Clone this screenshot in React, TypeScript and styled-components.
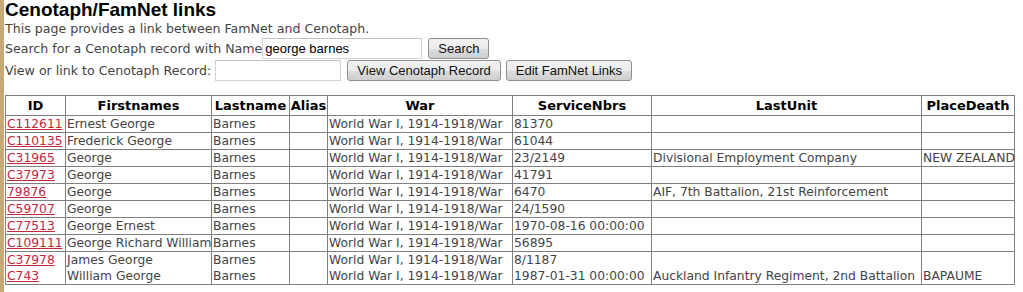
import styled, { createGlobalStyle } from 'styled-components';

const GlobalStyle = createGlobalStyle`
  body {
    margin: 0;
    background: #fff;
    font-family: 'DejaVu Sans', Verdana, sans-serif;
  }
`;

interface CenotaphRecord {
  id: string;
  firstnames: string;
  lastname: string;
  alias: string;
  war: string;
  serviceNbrs: string;
  lastUnit: string;
  placeDeath: string;
}

const WAR = 'World War I, 1914-1918/War';

const records: CenotaphRecord[][] = [
  [{ id: 'C112611', firstnames: 'Ernest George', lastname: 'Barnes', alias: '', war: WAR, serviceNbrs: '81370', lastUnit: '', placeDeath: '' }],
  [{ id: 'C110135', firstnames: 'Frederick George', lastname: 'Barnes', alias: '', war: WAR, serviceNbrs: '61044', lastUnit: '', placeDeath: '' }],
  [{ id: 'C31965', firstnames: 'George', lastname: 'Barnes', alias: '', war: WAR, serviceNbrs: '23/2149', lastUnit: 'Divisional Employment Company', placeDeath: 'NEW ZEALAND' }],
  [{ id: 'C37973', firstnames: 'George', lastname: 'Barnes', alias: '', war: WAR, serviceNbrs: '41791', lastUnit: '', placeDeath: '' }],
  [{ id: '79876', firstnames: 'George', lastname: 'Barnes', alias: '', war: WAR, serviceNbrs: '6470', lastUnit: 'AIF, 7th Battalion, 21st Reinforcement', placeDeath: '' }],
  [{ id: 'C59707', firstnames: 'George', lastname: 'Barnes', alias: '', war: WAR, serviceNbrs: '24/1590', lastUnit: '', placeDeath: '' }],
  [{ id: 'C77513', firstnames: 'George Ernest', lastname: 'Barnes', alias: '', war: WAR, serviceNbrs: '1970-08-16 00:00:00', lastUnit: '', placeDeath: '' }],
  [{ id: 'C109111', firstnames: 'George Richard William', lastname: 'Barnes', alias: '', war: WAR, serviceNbrs: '56895', lastUnit: '', placeDeath: '' }],
  [
    { id: 'C37978', firstnames: 'James George', lastname: 'Barnes', alias: '', war: WAR, serviceNbrs: '8/1187', lastUnit: '', placeDeath: '' },
    { id: 'C743', firstnames: 'William George', lastname: 'Barnes', alias: '', war: WAR, serviceNbrs: '1987-01-31 00:00:00', lastUnit: 'Auckland Infantry Regiment, 2nd Battalion', placeDeath: 'BAPAUME' },
  ],
];

const columns: { label: string; width: number }[] = [
  { label: 'ID', width: 60 },
  { label: 'Firstnames', width: 146 },
  { label: 'Lastname', width: 78 },
  { label: 'Alias', width: 38 },
  { label: 'War', width: 185 },
  { label: 'ServiceNbrs', width: 139 },
  { label: 'LastUnit', width: 270 },
  { label: 'PlaceDeath', width: 93 },
];

const Page = styled.div`
  border-left: 4px solid #c8a877;
  padding-left: 1px;
  min-height: 292px;
  box-sizing: border-box;
`;

const Title = styled.h1`
  margin: 0;
  font-family: 'Liberation Sans', Arial, sans-serif;
  font-size: 19px;
  line-height: 20px;
  font-weight: bold;
  color: #000;
`;

const Intro = styled.p`
  margin: 0;
  font-size: 12.6px;
  line-height: 17px;
  color: #444;
`;

const FormRow = styled.div`
  display: flex;
  align-items: center;
  height: 22px;
  font-size: 12.6px;
  color: #444;
`;

const TextField = styled.input<{ $width: number }>`
  width: ${p => p.$width}px;
  height: 21px;
  box-sizing: border-box;
  border: 1px solid #d4d4d4;
  border-top-color: #c0c0c0;
  padding: 0 2px;
  font-family: 'Liberation Sans', Arial, sans-serif;
  font-size: 13px;
  color: #000;
  outline: none;
`;

const Button = styled.button<{ $gap?: number }>`
  height: 21px;
  margin-left: ${p => p.$gap ?? 6}px;
  padding: 0 9px;
  border: 1px solid #8e8f8f;
  border-radius: 3px;
  background: linear-gradient(#f2f2f2 0%, #ebebeb 50%, #dddddd 51%, #cfcfcf 100%);
  font-family: 'Liberation Sans', Arial, sans-serif;
  font-size: 13px;
  color: #111;
`;

const Table = styled.table`
  width: 1010px;
  margin-top: 14px;
  border-collapse: collapse;
  table-layout: fixed;
  border: 1px solid #808080;
  font-size: 12.3px;
`;

const HeadCell = styled.th`
  border: 1px solid #808080;
  padding: 0;
  height: 19px;
  line-height: 16px;
  font-size: 13px;
  font-weight: bold;
  color: #000;
  white-space: nowrap;
  overflow: hidden;
`;

const Cell = styled.td`
  border: 1px solid #808080;
  padding: 0 0 0 1px;
  line-height: 16px;
  color: #444;
  white-space: nowrap;
  overflow: hidden;
  vertical-align: middle;
`;

const RecordLink = styled.a`
  color: #c0283c;
  text-decoration: underline;
`;

function stack(group: CenotaphRecord[], key: keyof CenotaphRecord) {
  return group.map((r, i) => (
    <span key={i}>
      {i > 0 && <br />}
      {r[key]}
    </span>
  ));
}

export default function App() {
  return (
    <Page>
      <GlobalStyle />
      <Title>Cenotaph/FamNet links</Title>
      <Intro>This page provides a link between FamNet and Cenotaph.</Intro>
      <FormRow>
        Search for a Cenotaph record with Name
        <TextField $width={160} defaultValue="george barnes" />
        <Button>Search</Button>
      </FormRow>
      <FormRow>
        View or link to Cenotaph Record:&nbsp;
        <TextField $width={126} />
        <Button>View Cenotaph Record</Button>
        <Button $gap={5}>Edit FamNet Links</Button>
      </FormRow>
      <Table>
        <colgroup>
          {columns.map(c => (
            <col key={c.label} style={{ width: c.width }} />
          ))}
        </colgroup>
        <thead>
          <tr>
            {columns.map(c => (
              <HeadCell key={c.label}>{c.label}</HeadCell>
            ))}
          </tr>
        </thead>
        <tbody>
          {records.map((group, gi) => (
            <tr key={gi}>
              <Cell>
                {group.map((r, i) => (
                  <span key={r.id}>
                    {i > 0 && <br />}
                    <RecordLink href="#">{r.id}</RecordLink>
                  </span>
                ))}
              </Cell>
              <Cell>{stack(group, 'firstnames')}</Cell>
              <Cell>{stack(group, 'lastname')}</Cell>
              <Cell>{stack(group, 'alias')}</Cell>
              <Cell>{stack(group, 'war')}</Cell>
              <Cell>{stack(group, 'serviceNbrs')}</Cell>
              <Cell>{stack(group, 'lastUnit')}</Cell>
              <Cell>{stack(group, 'placeDeath')}</Cell>
            </tr>
          ))}
        </tbody>
      </Table>
    </Page>
  );
}
